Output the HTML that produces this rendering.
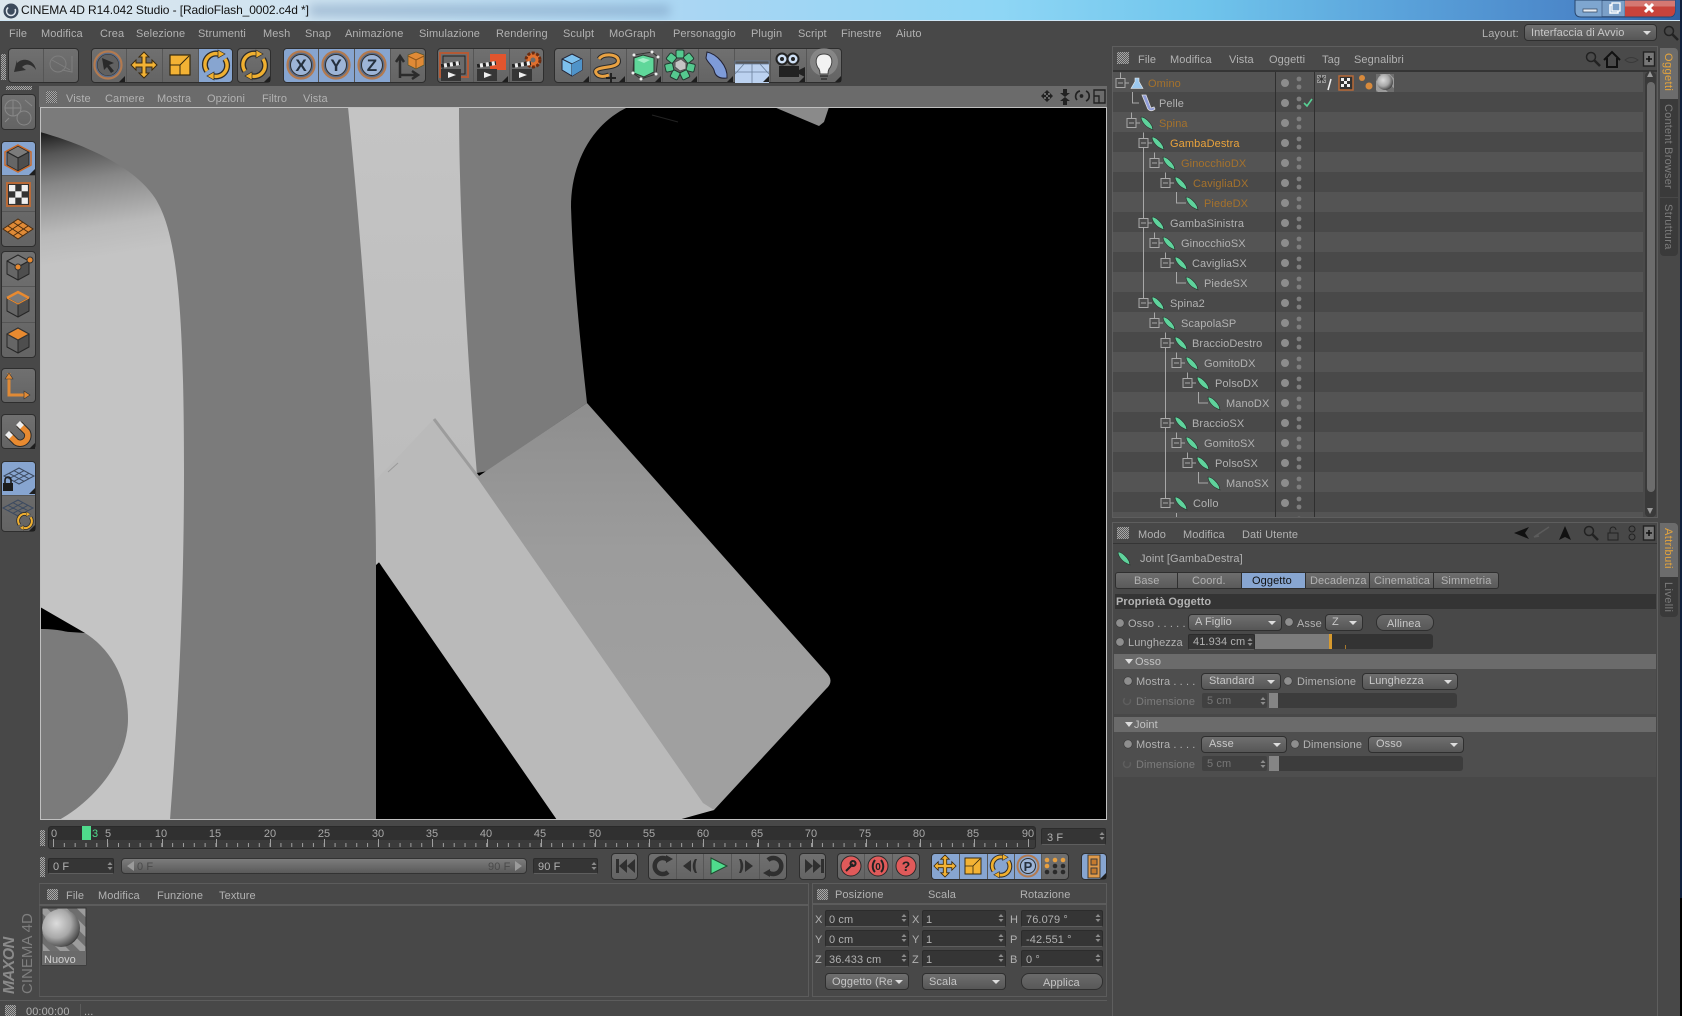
<!DOCTYPE html>
<html lang="it"><head><meta charset="utf-8"><title>CINEMA 4D R14.042 Studio</title>
<style>
html,body{margin:0;padding:0;width:1682px;height:1016px;overflow:hidden;background:#484848}
body{position:relative;font-family:"Liberation Sans",sans-serif;font-size:11px;color:#b2b2b2}
span{position:absolute;white-space:nowrap;line-height:14px;letter-spacing:.1px;margin-top:1px}
div{position:absolute;box-sizing:border-box}
.o{color:#a5722c}
.gr{background:repeating-conic-gradient(#a6a6a6 0 25%,#5a5a5a 0 50%) 0 0/2px 2px}
.g{background:linear-gradient(#707070,#646464);border:1px solid #2e2e2e;border-radius:4px}
.bl{background:#87a5d0}
.f{background:#353535;border:1px solid #2c2c2c;border-bottom-color:#5e5e5e;border-radius:2px}
.dd{background:linear-gradient(#6f6f6f,#565656);border:1px solid #2f2f2f;border-radius:4px}
.dd:after{content:"";position:absolute;right:5px;top:6px;border:4px solid transparent;border-top:4px solid #ddd;border-bottom:0}
.btn{background:linear-gradient(#6a6a6a,#585858);border:1px solid #2f2f2f;border-radius:8px}
.tab{background:linear-gradient(#6e6e6e,#5a5a5a);border:1px solid #2f2f2f;border-left:0;height:17px;top:572px}
.sec{background:#6b6b6b;left:1114px;width:542px;height:15px}
.vt{writing-mode:vertical-rl;letter-spacing:.4px}
</style></head><body>

<!-- title bar -->
<div style="left:0;top:0;width:1682px;height:21px;background:linear-gradient(90deg,#dde7ee 0,#cfe3f0 300px,#a9d6f3 700px,#8ed6f5 1000px,#70c5ec 1200px,#5aa2da 1400px,#4a85c8 1580px,#2f5f9f 1682px);border-bottom:1px solid #cfe6f5"></div>
<div style="left:310px;top:5px;width:360px;height:11px;background:#6f8fb4;opacity:.45;filter:blur(5px)"></div>
<span style="left:21px;top:2px;font-size:12px;color:#111;letter-spacing:-.1px">CINEMA 4D R14.042 Studio - [RadioFlash_0002.c4d *]</span>

<!-- menu -->
<span style="left:9px;top:26px">File</span><span style="left:41px;top:26px">Modifica</span><span style="left:100px;top:26px">Crea</span><span style="left:136px;top:26px">Selezione</span><span style="left:198px;top:26px">Strumenti</span><span style="left:263px;top:26px">Mesh</span><span style="left:305px;top:26px">Snap</span><span style="left:345px;top:26px">Animazione</span><span style="left:419px;top:26px">Simulazione</span><span style="left:496px;top:26px">Rendering</span><span style="left:563px;top:26px">Sculpt</span><span style="left:609px;top:26px">MoGraph</span><span style="left:673px;top:26px">Personaggio</span><span style="left:751px;top:26px">Plugin</span><span style="left:798px;top:26px">Script</span><span style="left:841px;top:26px">Finestre</span><span style="left:896px;top:26px">Aiuto</span>
<span style="left:1482px;top:26px">Layout:</span>
<div class="dd" style="left:1524px;top:24px;width:133px;height:17px"></div>
<span style="left:1531px;top:25px;color:#c8c8c8">Interfaccia di Avvio</span>

<!-- toolbar groups -->
<div class="gr" style="left:1px;top:54px;width:5px;height:26px"></div>
<div class="g" style="left:8px;top:48px;width:71px;height:35px"></div>
<div class="g" style="left:91px;top:48px;width:142px;height:35px"></div>
<div class="bl" style="left:198px;top:49px;width:34px;height:33px;border-radius:0 3px 3px 0"></div>
<div class="g" style="left:237px;top:48px;width:34px;height:35px"></div>
<div class="g" style="left:283px;top:48px;width:143px;height:35px"></div>
<div class="bl" style="left:284px;top:49px;width:106px;height:33px;border-radius:3px 0 0 3px"></div>
<div class="g" style="left:437px;top:48px;width:107px;height:35px"></div>
<div class="g" style="left:554px;top:48px;width:288px;height:35px"></div>

<!-- viewport header -->
<div style="left:39px;top:86px;width:1068px;height:21px;background:#6b6b6b"></div>
<div class="gr" style="left:46px;top:91px;width:11px;height:12px"></div>
<span style="left:66px;top:91px">Viste</span><span style="left:105px;top:91px">Camere</span><span style="left:157px;top:91px">Mostra</span><span style="left:207px;top:91px">Opzioni</span><span style="left:262px;top:91px">Filtro</span><span style="left:303px;top:91px">Vista</span>

<!-- left palette -->
<div class="gr" style="left:6px;top:86px;width:26px;height:4px"></div>
<div class="g" style="left:1px;top:94px;width:35px;height:36px"></div>
<div class="g" style="left:1px;top:141px;width:35px;height:106px"></div>
<div class="bl" style="left:2px;top:142px;width:33px;height:33px;border-radius:3px 3px 0 0"></div>
<div class="g" style="left:1px;top:251px;width:35px;height:107px"></div>
<div class="g" style="left:1px;top:368px;width:35px;height:35px"></div>
<div class="g" style="left:1px;top:414px;width:35px;height:35px"></div>
<div class="g" style="left:1px;top:461px;width:35px;height:71px"></div>
<div class="bl" style="left:2px;top:462px;width:33px;height:33px;border-radius:3px 3px 0 0"></div>

<!-- timeline -->
<div class="gr" style="left:40px;top:830px;width:5px;height:16px"></div>
<div style="left:48px;top:826px;width:988px;height:23px;background:linear-gradient(#303030 0,#303030 13px,#3b3b3b 13px);border:1px solid #2a2a2a;border-radius:3px"></div>
<div class="f" style="left:1041px;top:828px;width:65px;height:17px"></div>
<span style="left:1047px;top:830px">3 F</span>
<div class="gr" style="left:40px;top:857px;width:5px;height:20px"></div>
<div class="f" style="left:48px;top:858px;width:66px;height:16px"></div>
<span style="left:53px;top:859px">0 F</span>
<div style="left:121px;top:858px;width:406px;height:16px;border-radius:4px;border:1px solid #333;background:linear-gradient(#7c7c7c,#5a5a5a)"></div>
<span style="left:137px;top:859px;color:#4a4a4a">0 F</span><span style="left:488px;top:859px;color:#4a4a4a">90 F</span>
<div class="f" style="left:533px;top:858px;width:65px;height:16px"></div>
<span style="left:538px;top:859px">90 F</span>
<div class="g" style="left:611px;top:853px;width:27px;height:27px"></div>
<div class="g" style="left:648px;top:853px;width:139px;height:27px"></div>
<div class="g" style="left:799px;top:853px;width:27px;height:27px"></div>
<div class="g" style="left:837px;top:853px;width:83px;height:27px"></div>
<div class="g" style="left:931px;top:853px;width:138px;height:27px"></div>
<div class="bl" style="left:932px;top:854px;width:109px;height:25px;border-radius:3px 0 0 3px"></div>
<div class="g bl" style="left:1081px;top:853px;width:26px;height:27px"></div>

<!-- material panel -->
<div style="left:39px;top:883px;width:770px;height:114px;border:1px solid #5c5c5c;border-left-color:#565656"></div>
<div style="left:39px;top:904px;width:770px;height:2px;background:#5c5c5c"></div>
<div class="gr" style="left:47px;top:889px;width:11px;height:11px"></div>
<span style="left:66px;top:888px">File</span><span style="left:98px;top:888px">Modifica</span><span style="left:157px;top:888px">Funzione</span><span style="left:219px;top:888px">Texture</span>

<!-- coord panel -->
<div style="left:812px;top:883px;width:295px;height:114px;border:1px solid #5c5c5c"></div>
<div style="left:812px;top:903px;width:295px;height:2px;background:#5c5c5c"></div>
<div class="gr" style="left:817px;top:889px;width:11px;height:11px"></div>
<span style="left:835px;top:887px">Posizione</span><span style="left:928px;top:887px">Scala</span><span style="left:1020px;top:887px">Rotazione</span>
<span style="left:815px;top:912px">X</span><span style="left:815px;top:932px">Y</span><span style="left:815px;top:952px">Z</span>
<span style="left:912px;top:912px">X</span><span style="left:912px;top:932px">Y</span><span style="left:912px;top:952px">Z</span>
<span style="left:1010px;top:912px">H</span><span style="left:1010px;top:932px">P</span><span style="left:1010px;top:952px">B</span>
<div class="f" style="left:825px;top:910px;width:84px;height:17px"></div><div class="f" style="left:825px;top:930px;width:84px;height:17px"></div><div class="f" style="left:825px;top:950px;width:84px;height:17px"></div>
<div class="f" style="left:922px;top:910px;width:84px;height:17px"></div><div class="f" style="left:922px;top:930px;width:84px;height:17px"></div><div class="f" style="left:922px;top:950px;width:84px;height:17px"></div>
<div class="f" style="left:1021px;top:910px;width:82px;height:17px"></div><div class="f" style="left:1021px;top:930px;width:82px;height:17px"></div><div class="f" style="left:1021px;top:950px;width:82px;height:17px"></div>
<span style="left:829px;top:912px">0 cm</span><span style="left:829px;top:932px">0 cm</span><span style="left:829px;top:952px">36.433 cm</span>
<span style="left:926px;top:912px">1</span><span style="left:926px;top:932px">1</span><span style="left:926px;top:952px">1</span>
<span style="left:1026px;top:912px">76.079 °</span><span style="left:1026px;top:932px">-42.551 °</span><span style="left:1026px;top:952px">0 °</span>
<div class="dd" style="left:825px;top:973px;width:84px;height:17px"></div><span style="left:832px;top:974px;width:60px;overflow:hidden;color:#c4c4c4">Oggetto (Relativo)</span>
<div class="dd" style="left:922px;top:973px;width:84px;height:17px"></div><span style="left:929px;top:974px;color:#c4c4c4">Scala</span>
<div class="btn" style="left:1021px;top:973px;width:82px;height:17px"></div><span style="left:1043px;top:975px;color:#c4c4c4">Applica</span>

<!-- status -->
<div style="left:0;top:1000px;width:1107px;height:1px;background:#5c5c5c"></div>
<div class="gr" style="left:5px;top:1005px;width:11px;height:11px"></div>
<span style="left:26px;top:1004px">00:00:00</span>
<div style="left:80px;top:1004px;width:1px;height:12px;background:#5c5c5c"></div>
<span style="left:84px;top:1004px">...</span>

<!-- MAXON logo -->
<span class="vt" style="left:3px;top:934px;height:60px;transform:rotate(180deg);font-size:16px;line-height:14px;color:#8a8a8a;letter-spacing:-.6px;margin:0"><b style="font-style:italic">MAXON</b></span>
<span class="vt" style="left:19px;top:913px;height:81px;transform:rotate(180deg);font-size:15px;line-height:17px;color:#7e7e7e;letter-spacing:0;margin:0">CINEMA 4D</span>

<!-- object manager -->
<div style="left:1112px;top:46px;width:546px;height:472px;border:1px solid #5e5e5e;background:#4a4a4a"></div>
<div style="left:1113px;top:70px;width:544px;height:2px;background:#353535"></div>
<div class="gr" style="left:1117px;top:52px;width:12px;height:12px"></div>
<span style="left:1138px;top:52px">File</span><span style="left:1170px;top:52px">Modifica</span><span style="left:1229px;top:52px">Vista</span><span style="left:1269px;top:52px">Oggetti</span><span style="left:1322px;top:52px">Tag</span><span style="left:1354px;top:52px">Segnalibri</span>
<div style="left:1113px;top:72px;width:530px;height:445px;background:repeating-linear-gradient(#545454 0,#545454 20px,#494949 20px,#494949 40px)"></div>
<div style="left:1275px;top:72px;width:1px;height:445px;background:#2f2f2f"></div>
<div style="left:1314px;top:72px;width:1px;height:445px;background:#2f2f2f"></div>
<div style="left:1645px;top:72px;width:11px;height:445px;background:#3a3a3a;border-radius:4px"></div>
<div style="left:1647px;top:82px;width:8px;height:410px;background:#6c6c6c;border-radius:4px"></div>
<div style="left:0;top:1px">
<span class="o" style="left:1148px;top:75px">Omino</span>
<span style="left:1159px;top:95px">Pelle</span>
<span class="o" style="left:1159px;top:115px">Spina</span>
<span style="left:1170px;top:135px;color:#eaa33c">GambaDestra</span>
<span class="o" style="left:1181px;top:155px">GinocchioDX</span>
<span class="o" style="left:1193px;top:175px">CavigliaDX</span>
<span class="o" style="left:1204px;top:195px">PiedeDX</span>
<span style="left:1170px;top:215px">GambaSinistra</span>
<span style="left:1181px;top:235px">GinocchioSX</span>
<span style="left:1192px;top:255px">CavigliaSX</span>
<span style="left:1204px;top:275px">PiedeSX</span>
<span style="left:1170px;top:295px">Spina2</span>
<span style="left:1181px;top:315px">ScapolaSP</span>
<span style="left:1192px;top:335px">BraccioDestro</span>
<span style="left:1204px;top:355px">GomitoDX</span>
<span style="left:1215px;top:375px">PolsoDX</span>
<span style="left:1226px;top:395px">ManoDX</span>
<span style="left:1192px;top:415px">BraccioSX</span>
<span style="left:1204px;top:435px">GomitoSX</span>
<span style="left:1215px;top:455px">PolsoSX</span>
<span style="left:1226px;top:475px">ManoSX</span>
<span style="left:1193px;top:495px">Collo</span>
</div>

<!-- right tabs -->
<div style="left:1660px;top:48px;width:18px;height:51px;background:#6c6c6c;border-radius:0 4px 0 0"></div>
<div style="left:1660px;top:99px;width:18px;height:98px;background:#3a3a3a"></div>
<div style="left:1660px;top:198px;width:18px;height:58px;background:#3a3a3a;border-radius:0 0 4px 4px"></div>
<div style="left:1660px;top:523px;width:18px;height:54px;background:#6c6c6c;border-radius:0 4px 0 0"></div>
<div style="left:1660px;top:577px;width:18px;height:40px;background:#3a3a3a;border-radius:0 0 4px 4px"></div>
<span class="vt" style="left:1661px;top:52px;color:#e6a53c">Oggetti</span>
<span class="vt" style="left:1661px;top:103px;color:#7c7c7c;letter-spacing:.2px">Content Browser</span>
<span class="vt" style="left:1661px;top:203px;color:#7c7c7c">Struttura</span>
<span class="vt" style="left:1661px;top:527px;color:#e6a53c">Attributi</span>
<span class="vt" style="left:1661px;top:581px;color:#7c7c7c">Livelli</span>
<div style="left:1680px;top:0;width:2px;height:898px;background:#10203c"></div>
<div style="left:1680px;top:898px;width:2px;height:118px;background:#000"></div>

<!-- attribute manager -->
<div style="left:1112px;top:522px;width:546px;height:494px;border:1px solid #5e5e5e;border-bottom:0"></div>
<div style="left:1113px;top:543px;width:544px;height:1px;background:#353535"></div>
<div class="gr" style="left:1117px;top:527px;width:12px;height:12px"></div>
<span style="left:1138px;top:527px">Modo</span><span style="left:1183px;top:527px">Modifica</span><span style="left:1242px;top:527px">Dati Utente</span>
<span style="left:1140px;top:551px">Joint [GambaDestra]</span>
<div class="tab" style="left:1115px;width:63px;border-left:1px solid #2f2f2f;border-radius:3px 0 0 3px"></div>
<div class="tab" style="left:1178px;width:64px"></div>
<div class="tab" style="left:1242px;width:64px;background:#88a6d1"></div>
<div class="tab" style="left:1306px;width:64px"></div>
<div class="tab" style="left:1370px;width:64px"></div>
<div class="tab" style="left:1434px;width:65px;border-radius:0 3px 3px 0"></div>
<span style="left:1134px;top:573px">Base</span><span style="left:1192px;top:573px">Coord.</span><span style="left:1252px;top:573px;color:#111">Oggetto</span><span style="left:1310px;top:573px">Decadenza</span><span style="left:1374px;top:573px">Cinematica</span><span style="left:1441px;top:573px">Simmetria</span>
<div style="left:1115px;top:594px;width:541px;height:15px;background:#343434"></div>
<span style="left:1116px;top:594px;font-weight:bold;color:#b4b4b4">Proprietà Oggetto</span>
<span style="left:1128px;top:616px">Osso . . . . .</span>
<div class="dd" style="left:1188px;top:614px;width:94px;height:17px"></div><span style="left:1195px;top:614px;color:#c8c8c8">A Figlio</span>
<span style="left:1297px;top:616px">Asse</span>
<div class="dd" style="left:1325px;top:614px;width:38px;height:17px"></div><span style="left:1332px;top:614px;color:#c8c8c8">Z</span>
<div class="btn" style="left:1376px;top:614px;width:58px;height:17px"></div><span style="left:1387px;top:616px;color:#c8c8c8">Allinea</span>
<span style="left:1128px;top:635px">Lunghezza</span>
<div class="f" style="left:1188px;top:634px;width:67px;height:16px"></div><span style="left:1193px;top:634px">41.934 cm</span>
<div style="left:1255px;top:634px;width:178px;height:15px;background:#333;border-radius:0 3px 3px 0"></div>
<div style="left:1255px;top:634px;width:74px;height:15px;background:#7c7c7c"></div>
<div style="left:1329px;top:634px;width:3px;height:15px;background:#d79a2e"></div>
<div style="left:1345px;top:645px;width:1px;height:4px;background:#a8792c"></div>
<div style="left:1114px;top:669px;width:542px;height:45px;background:#4e4e4e"></div>
<div class="sec" style="top:654px"></div><span style="left:1135px;top:654px;color:#c4c4c4">Osso</span>
<span style="left:1136px;top:674px">Mostra . . . .</span>
<div class="dd" style="left:1201px;top:673px;width:80px;height:17px"></div><span style="left:1209px;top:673px;color:#c8c8c8">Standard</span>
<span style="left:1297px;top:674px">Dimensione</span>
<div class="dd" style="left:1362px;top:673px;width:96px;height:17px"></div><span style="left:1369px;top:673px;color:#c8c8c8">Lunghezza</span>
<span style="left:1136px;top:694px;color:#7c7c7c">Dimensione</span>
<div style="left:1202px;top:693px;width:65px;height:15px;background:#414141;border-radius:2px"></div><span style="left:1207px;top:693px;color:#777">5 cm</span>
<div style="left:1269px;top:693px;width:188px;height:15px;background:#3c3c3c;border-radius:0 3px 3px 0"></div>
<div style="left:1269px;top:693px;width:9px;height:15px;background:#858585"></div>
<div style="left:1114px;top:732px;width:542px;height:45px;background:#4e4e4e"></div>
<div class="sec" style="top:717px"></div><span style="left:1134px;top:717px;color:#c4c4c4">Joint</span>
<span style="left:1136px;top:737px">Mostra . . . .</span>
<div class="dd" style="left:1201px;top:736px;width:86px;height:17px"></div><span style="left:1209px;top:736px;color:#c8c8c8">Asse</span>
<span style="left:1303px;top:737px">Dimensione</span>
<div class="dd" style="left:1368px;top:736px;width:96px;height:17px"></div><span style="left:1376px;top:736px;color:#c8c8c8">Osso</span>
<span style="left:1136px;top:757px;color:#7c7c7c">Dimensione</span>
<div style="left:1202px;top:756px;width:65px;height:15px;background:#414141;border-radius:2px"></div><span style="left:1207px;top:756px;color:#777">5 cm</span>
<div style="left:1269px;top:756px;width:194px;height:15px;background:#3c3c3c;border-radius:0 3px 3px 0"></div>
<div style="left:1269px;top:756px;width:10px;height:15px;background:#858585"></div>

<!-- graphics overlay -->
<svg width="1682" height="1016" viewBox="0 0 1682 1016" style="position:absolute;left:0;top:0" font-family="Liberation Sans, sans-serif">
<defs>
<clipPath id="vp"><rect x="40" y="107" width="1067" height="713"/></clipPath>
<linearGradient id="lg" gradientUnits="userSpaceOnUse" x1="50" y1="126" x2="72" y2="262"><stop offset="0" stop-color="#0e0e0e"/><stop offset=".2" stop-color="#555"/><stop offset=".42" stop-color="#868686"/><stop offset=".78" stop-color="#bababa"/><stop offset="1" stop-color="#c4c4c4"/></linearGradient>
<linearGradient id="pn" gradientUnits="userSpaceOnUse" x1="0" y1="403" x2="0" y2="700"><stop offset="0" stop-color="#8e8e8e"/><stop offset=".5" stop-color="#9c9c9c"/><stop offset="1" stop-color="#a0a0a0"/></linearGradient>
<linearGradient id="sg" gradientUnits="userSpaceOnUse" x1="0" y1="107" x2="0" y2="560"><stop offset="0" stop-color="#c4c4c4"/><stop offset="1" stop-color="#bbb"/></linearGradient>
<radialGradient id="sph" cx=".38" cy=".38" r=".7"><stop offset="0" stop-color="#dcdcdc"/><stop offset=".55" stop-color="#a8a8a8"/><stop offset=".9" stop-color="#505050"/><stop offset="1" stop-color="#1a1a1a"/></radialGradient>
<pattern id="dots" patternUnits="userSpaceOnUse" x="1276" y="72" width="38" height="20"><circle cx="9" cy="10" r="4" fill="#8d8d8d"/><circle cx="23" cy="6" r="2.4" fill="#7e7e7e"/><circle cx="23" cy="14" r="2.4" fill="#7e7e7e"/></pattern>
<pattern id="tk" patternUnits="userSpaceOnUse" x="53" y="0" width="10.83" height="10"><rect width="1" height="10" fill="#a0a0a0"/></pattern>
<pattern id="st" patternUnits="userSpaceOnUse" width="14" height="14" patternTransform="rotate(-45)"><rect width="14" height="14" fill="#6e6e6e"/><rect width="7" height="14" fill="#9c9c9c"/></pattern>
<g id="mb" stroke="#a8a8a8"><path d="M0-4.500v-6M4.500 0h4" fill="none"/><path d="M-4.500-4.500h9v9h-9z" fill="#4e4e4e"/><path d="M-2.500 0h5" fill="none"/></g>
<g id="bn"><path d="M-6-6C-2-6 3-1 5 3L6 7 2 5C-2 3-6-2-6-6Z" fill="#5fd39c" stroke="#25302a" stroke-width=".6"/></g>
<g id="rot" fill="none"><path d="M3-11A11 11 0 0 0-9 6M-3 11A11 11 0 0 0 9-6" stroke="#2c2c2c" stroke-width="6"/><path d="M3-11A11 11 0 0 0-9 6M-3 11A11 11 0 0 0 9-6" stroke="#f0b030" stroke-width="3.400"/><path d="M2-15l7 4-7 4zM-2 15l-7-4 7-4z" fill="#f0b030" stroke="#2c2c2c" stroke-width=".7"/></g>
<g id="mv"><path d="M0-13l5 5h-3v6h6v-3l5 5-5 5v-3h-6v6h3l-5 5-5-5h3v-6h-6v3l-5-5 5-5v3h6v-6h-3z" fill="#f3b234" stroke="#3a2a10"/></g>
<g id="sc"><rect x="-10" y="-10" width="20" height="20" fill="#f3b234" stroke="#33280f" stroke-width="1.200"/><path d="M-10 0H0V10M0 0L9-9" fill="none" stroke="#33280f"/></g>
<g id="ring"><circle r="13.500" fill="#5a6c88" stroke="#b27a50" stroke-width="2.200"/><circle r="10.500" fill="#9db4d6" stroke="#2e2e2e"/></g>
<g id="cl"><rect x="-10" y="-1" width="20" height="12" fill="#363636"/><path d="M-3 2l8 3-8 3z" fill="#eee"/><path d="M-10-4l19-3" stroke="#eee" stroke-width="4"/><path d="M-10-4l19-3" stroke="#222" stroke-width="4" stroke-dasharray="3 3"/></g>
<g id="pc" stroke="#262626" stroke-linejoin="round"><path d="M0-12L11-6 0 0-11-6Z" fill="#7b7b7b"/><path d="M-11-6L0 0V13L-11 7Z" fill="#666"/><path d="M11-6L0 0V13L11 7Z" fill="#4e4e4e"/></g>
<g id="sp" fill="#8c8c8c"><path d="M-2.500-1L0-4 2.500-1ZM-2.500 1L0 4 2.500 1Z"/></g>
<g id="rad"><circle r="4.200" fill="#8e8e8e" stroke="#383838" stroke-width=".6"/></g>
<g id="rad2"><circle r="3.500" fill="none" stroke="#5e5e5e" stroke-width="1.500" stroke-dasharray="14 6"/></g>
<g id="plus"><rect x="-5.500" y="-7" width="11" height="14" fill="#777" stroke="#222" stroke-width="1.400"/><path d="M-3 0h6M0-3v6" stroke="#111" stroke-width="1.600"/></g>
<g id="srch" fill="none" stroke="#222"><circle cx="-2" cy="-2" r="4.500" stroke-width="1.500"/><path d="M1.500 1.500L7 7" stroke-width="2.500"/></g>
<g id="grd" fill="none" stroke="#3c4a60"><path d="M-15 0L0-8 15 0 0 8ZM-10-2.700L5 5.300M-5-5.300L10 2.700M-10 2.700L5-5.300M-5 5.300L10-2.700"/></g>
</defs>

<!-- app icon -->
<circle cx="11" cy="11" r="7.500" fill="#3c4a5c"/><circle cx="11" cy="11" r="4.500" fill="none" stroke="#dfe6ee" stroke-width="1.500" stroke-dasharray="18 8"/>
<!-- window controls -->
<path d="M1575 0h100v11q0 6-6 6h-88q-6 0-6-6z" fill="#7ea6d0" stroke="#27456e"/>
<path d="M1602 .5h23v16h-23z" fill="#7ba0c8" stroke="#2d4a72" stroke-width=".6"/>
<path d="M1625 .5h50v10q0 6-6 6h-44z" fill="#c8433b"/><path d="M1625 .5h50v6h-50z" fill="#d98a85" opacity=".75"/>
<path d="M1583 9h14v3h-14z" fill="#e8eef4" stroke="#33465e" stroke-width=".7"/>
<rect x="1610" y="5" width="8" height="8" fill="none" stroke="#fff" stroke-width="1.500"/><rect x="1612" y="3" width="8" height="8" fill="#7ba0c8" stroke="#fff" stroke-width="1.300"/>
<path d="M1645 4l8 8M1653 4l-8 8" stroke="#fff" stroke-width="3"/>
<use href="#srch" x="1671" y="33"/>

<!-- viewport -->
<g clip-path="url(#vp)">
<rect x="40" y="107" width="1067" height="713" fill="#000"/>
<path d="M40 107H628C590 125 571 165 571 207C573 270 580 340 587 403L478 477 376 558V820H40Z" fill="#7b7b7b"/>
<path d="M774 107L819 126 824 122 829 107Z" fill="#8a8a8a"/>
<path d="M348 107H459C459 200 466 340 477 475L376 565C376 472 370 330 348 107Z" fill="url(#sg)"/>
<path d="M477 473L488 471 479 479Z" fill="#000"/>
<path d="M470 482L587 403 826 672Q835 681 826 689L714 810 690 815Z" fill="url(#pn)"/>
<path d="M434 419L376 480V558L557 820H678L714 810 703 803 478 479Z" fill="#bababa"/>
<path d="M434 419L478 477" stroke="#9c9c9c" stroke-width="3" fill="none"/>
<path d="M388 472l10-9" stroke="#9a9a9a" fill="none"/>
<path d="M652 115l26 7" stroke="#222" fill="none"/>
<path d="M40 132C90 146 135 168 155 198C175 230 184 290 184 472C184 620 176 740 170 820H59C95 800 128 760 128 719C128 680 112 650 85 633L40 607Z" fill="url(#lg)"/>
<path d="M40 607L85 633 40 630Z" fill="#000"/>
<path d="M40 629C80 628 114 648 124 690C132 730 115 780 59 820H40Z" fill="#7b7b7b"/>
</g>
<rect x="40.500" y="107.500" width="1066" height="712" fill="none" stroke="#c0c0c0"/>

<!-- toolbar separators -->
<path d="M43.500 49v33M126.500 49v33M162.500 49v33M198.500 49v33M318.500 49v33M354.500 49v33M390.500 49v33M473.500 49v33M509.500 49v33M590.500 49v33M626.500 49v33M662.500 49v33M698.500 49v33M734.500 49v33M770.500 49v33M806.500 49v33" stroke="#565656" fill="none"/>
<!-- undo/redo -->
<path d="M17 60l-3 12 12-2-4-3c4-4 10-3 14 3-1-9-12-14-19-7z" fill="#2f2f2f"/>
<g fill="none" stroke="#7e7e7e"><circle cx="58" cy="64" r="8"/><path d="M52 60l18 10M72 56v16l-10-2"/></g>
<!-- select -->
<use href="#ring" x="108" y="65"/><circle cx="108" cy="65" r="10.500" fill="#616161"/>
<path d="M102 58l12 5-5 2 5 6-3 2-4-6-3 3z" fill="#2a2a2a"/>
<path d="M125 82h-6l6-6z" fill="#1e1e1e"/>
<use href="#mv" x="144" y="65"/><use href="#sc" x="180" y="65"/><use href="#rot" x="216" y="65"/><use href="#rot" x="254" y="65"/>
<path d="M270 82h-6l6-6z" fill="#1e1e1e"/>
<use href="#ring" x="301" y="65"/><use href="#ring" x="336" y="65"/><use href="#ring" x="372" y="65"/>
<text x="301" y="71" text-anchor="middle" font-size="17" font-weight="bold" fill="#25303e">X</text>
<text x="336" y="71" text-anchor="middle" font-size="17" font-weight="bold" fill="#25303e">Y</text>
<text x="372" y="71" text-anchor="middle" font-size="17" font-weight="bold" fill="#25303e">Z</text>
<path d="M400 78V58M396 62l4-6 4 6M400 75h16M412 71l6 4-6 4" stroke="#2b2b2b" stroke-width="2.500" fill="none"/>
<path d="M416 52l8 3v10l-8 4-8-4V55z" fill="#e08a36" stroke="#553" stroke-width=".7"/><path d="M408 56l8 4 8-4M416 60v9" stroke="#8d5519" fill="none"/>
<!-- clappers -->
<rect x="440" y="53" width="28" height="24" fill="none" stroke="#b35a36" stroke-width="2"/><rect x="443" y="56" width="22" height="18" fill="#6b6b6b" stroke="#222"/>
<use href="#cl" x="451" y="70"/>
<rect x="490" y="54" width="16" height="16" fill="#e2552e"/><use href="#cl" x="487" y="70"/><path d="M508 82h-6l6-6z" fill="#1e1e1e"/>
<circle cx="533" cy="60" r="7" fill="#e2702e" stroke="#6b2c10" stroke-dasharray="3 1.500" stroke-width="3"/><circle cx="533" cy="60" r="2.500" fill="#6b6b6b"/><use href="#cl" x="522" y="70"/>
<!-- group 6 -->
<path d="M572 54l10 5v11l-10 6-10-6V59z" fill="#7cc0ee" stroke="#223"/><path d="M562 59l10 5 10-5M572 64v12" stroke="#223" fill="none"/><path d="M572 64l10-5v11l-10 6z" fill="#4f93c9"/><path d="M589 82h-6l6-6z" fill="#1e1e1e"/>
<path d="M599 59c4-6 17-5 19 0s-3 7-10 8-14 2-12 6 8 4 13 2" fill="none" stroke="#2b2b2b" stroke-width="5"/><path d="M599 59c4-6 17-5 19 0s-3 7-10 8-14 2-12 6 8 4 13 2" fill="none" stroke="#e9a243" stroke-width="3"/><path d="M606 78h10M611 73v10" stroke="#222" stroke-width="2"/><path d="M625 82h-6l6-6z" fill="#1e1e1e"/>
<path d="M634 58l9-3 11 3v14l-10 5-10-4z" fill="#5fd79a" stroke="#2a3a30"/><path d="M637 60l6-2 7 2-6 3z" fill="#a4efc8"/>
<path d="M634 55l18-3 6 5-2 17-15 5-8-6z" fill="none" stroke="#333"/><g fill="#eee"><circle cx="634" cy="55" r="1.500"/><circle cx="652" cy="52" r="1.500"/><circle cx="658" cy="57" r="1.500"/><circle cx="656" cy="74" r="1.500"/><circle cx="641" cy="79" r="1.500"/><circle cx="633" cy="73" r="1.500"/></g><path d="M661 82h-6l6-6z" fill="#1e1e1e"/>
<g transform="translate(680 65)" fill="#55c98f" stroke="#223a30"><rect x="-4" y="-15" width="8" height="8" rx="1.500"/><rect x="-4" y="-15" width="8" height="8" rx="1.500" transform="rotate(51)"/><rect x="-4" y="-15" width="8" height="8" rx="1.500" transform="rotate(103)"/><rect x="-4" y="-15" width="8" height="8" rx="1.500" transform="rotate(154)"/><rect x="-4" y="-15" width="8" height="8" rx="1.500" transform="rotate(206)"/><rect x="-4" y="-15" width="8" height="8" rx="1.500" transform="rotate(257)"/><rect x="-4" y="-15" width="8" height="8" rx="1.500" transform="rotate(309)"/><path d="M-5-3L1-6 6-2V4L0 6-5 2Z" fill="#c4c4c4" stroke="#555"/></g><path d="M697 82h-6l6-6z" fill="#1e1e1e"/>
<path d="M707 52c10 2 21 14 20 26-8 1-12-2-13-8-2-5-7-8-8-12z" fill="#7e9bd8" stroke="#223"/><path d="M733 82h-6l6-6z" fill="#1e1e1e"/>
<rect x="735" y="61" width="34" height="22" fill="#bcd2f0"/><path d="M735 61h34v3h-34zM752 64v19M735 72h34M744 64l-9 10M760 64l9 10" fill="#555" stroke="#6a7f99" stroke-width=".8"/><path d="M769 82h-6l6-6z" fill="#1e1e1e"/>
<circle cx="782" cy="59" r="5.500" fill="#cfe0f5" stroke="#222" stroke-width="2"/><circle cx="793" cy="59" r="5.500" fill="#cfe0f5" stroke="#222" stroke-width="2"/><circle cx="782" cy="59" r="2" fill="#222"/><circle cx="793" cy="59" r="2" fill="#222"/><rect x="779" y="66" width="20" height="11" fill="#222"/><path d="M799 70l6-3v10l-6-3z" fill="#222"/><path d="M805 82h-6l6-6z" fill="#1e1e1e"/>
<circle cx="824" cy="62" r="14" fill="#9a9a9a" opacity=".55"/><path d="M824 54c-10 0-9 11-5 15 1 2 1 4 1 5h8c0-1 0-3 1-5 4-4 5-15-5-15z" fill="#f2f2f2" stroke="#444"/><path d="M820 76h8M821 79h6" stroke="#333" stroke-width="1.500"/><path d="M841 82h-6l6-6z" fill="#1e1e1e"/>

<!-- viewport header icons -->
<g transform="translate(0 -4)"><g fill="#222"><path d="M1047 94l3 3h-2v2h-2v-2h-2zM1047 106l3-3h-2v-2h-2v2h-2zM1041 100l3-3v2h2v2h-2v2zM1053 100l-3-3v2h-2v2h2v2z"/><path d="M1063 93h4v4h3l-5 4-5-4h3zM1065 101l5 4h-3v4h-4v-4h-3z"/></g>
<g fill="none" stroke="#222" stroke-width="1.700"><path d="M1086 95a5.500 5.500 0 0 1 0 10M1077 104a5.500 5.500 0 0 1 3-9"/><circle cx="1081.500" cy="100" r="1" fill="#222"/></g>
<path d="M1094 94h11v13h-11zM1094 100h5v7" fill="none" stroke="#222" stroke-width="1.400"/></g>

<!-- palette separators + icons -->
<path d="M2 175.500h33M2 211.500h33M2 286.500h33M2 322.500h33M2 495.500h33" stroke="#555"/>
<g fill="none" stroke="#888"><circle cx="13" cy="108" r="8"/><circle cx="24" cy="118" r="7"/><path d="M5 108h16M13 100v16M25 100l7 6M9 118l-4 4"/></g>
<use href="#pc" x="18" y="158"/><path d="M18 145l13 7v13l-13 7-13-7v-13z" fill="none" stroke="#c86a2a" stroke-width="1.500"/><path d="M35 175h-6l6-6z" fill="#1e1e1e"/>
<rect x="7" y="183" width="23" height="23" fill="#333" stroke="#b86a38" stroke-width="2"/><g fill="#f0f0f0"><rect x="9" y="185" width="6.300" height="6.300"/><rect x="21.600" y="185" width="6.300" height="6.300"/><rect x="15.300" y="191.300" width="6.300" height="6.300"/><rect x="9" y="197.600" width="6.300" height="6.300"/><rect x="21.600" y="197.600" width="6.300" height="6.300"/></g>
<path d="M3 229l15-10 15 10-15 10z" fill="#e08a36" stroke="#4a2c10"/><path d="M8 226l15 10M13 222l15 10M8 232l15-10M13 236l15-10" stroke="#4a2c10" fill="none"/>
<use href="#pc" x="18" y="267"/><circle cx="18" cy="267" r="3" fill="#e88a30" stroke="#333"/><circle cx="30" cy="260" r="3" fill="#e88a30" stroke="#333"/>
<use href="#pc" x="18" y="304"/><path d="M7 298l11-6 11 6" fill="none" stroke="#e88a30" stroke-width="2.500"/><path d="M7 298l11 6 11-6" fill="none" stroke="#e88a30" stroke-width="1"/>
<use href="#pc" x="18" y="340"/><path d="M18 328L29 334 18 340 7 334Z" fill="#e88a30" stroke="#333"/>
<path d="M9 373v22h17" fill="none" stroke="#e08a36" stroke-width="3"/><path d="M5 379l4-6 4 6zM24 391l6 4-6 4z" fill="#e08a36" stroke="#333" stroke-width=".6"/>
<path d="M8 434l8 8A7.700 7.700 0 0 0 27 432l-8-8" fill="none" stroke="#2a2a2a" stroke-width="7.500"/><path d="M8 434l8 8A7.700 7.700 0 0 0 27 432l-8-8" fill="none" stroke="#e88a30" stroke-width="5.500"/><path d="M7 433l4 4M18 423l4 4" stroke="#eee" stroke-width="5.500"/><path d="M35 449h-6l6-6z" fill="#1e1e1e"/>
<use href="#grd" x="19" y="476"/><rect x="3" y="483" width="10" height="8" fill="#1c1c1c"/><path d="M5 483v-3a3 3 0 0 1 6 0v3" fill="none" stroke="#1c1c1c" stroke-width="1.600"/><path d="M35 494h-6l6-6z" fill="#1e1e1e"/>
<use href="#grd" x="18" y="508"/><use href="#rot" transform="translate(25 521) scale(.62)"/><path d="M35 531h-6l6-6z" fill="#1e1e1e"/>

<!-- timeline -->
<rect x="53" y="843" width="974" height="4" fill="url(#tk)"/>
<path d="M53.500 839v8M107.500 839v8M162.500 839v8M216.500 839v8M270.500 839v8M324.500 839v8M378.500 839v8M432.500 839v8M487.500 839v8M541.500 839v8M595.500 839v8M649.500 839v8M703.500 839v8M758.500 839v8M812.500 839v8M866.500 839v8M920.500 839v8M974.500 839v8M1028.500 839v8" stroke="#a0a0a0"/>
<g font-size="11" fill="#a8a8a8" text-anchor="middle"><text x="54" y="837">0</text><text x="108" y="837">5</text><text x="161" y="837">10</text><text x="215" y="837">15</text><text x="270" y="837">20</text><text x="324" y="837">25</text><text x="378" y="837">30</text><text x="432" y="837">35</text><text x="486" y="837">40</text><text x="540" y="837">45</text><text x="595" y="837">50</text><text x="649" y="837">55</text><text x="703" y="837">60</text><text x="757" y="837">65</text><text x="811" y="837">70</text><text x="865" y="837">75</text><text x="919" y="837">80</text><text x="973" y="837">85</text><text x="1028" y="837">90</text></g>
<rect x="82" y="826" width="9" height="14" fill="#4fdb8c"/>
<text x="92" y="837" font-size="11" fill="#4fdb8c">3</text>
<use href="#sp" x="110" y="866"/><use href="#sp" x="594" y="866"/><use href="#sp" x="1102" y="836"/>
<path d="M134 861l-7 5 7 5zM515 861l7 5-7 5z" fill="#9a9a9a"/>

<!-- transport -->
<path d="M676.500 854v25M703.500 854v25M731.500 854v25M759.500 854v25M864.500 854v25M892.500 854v25M959.500 854v25M987.500 854v25M1014.500 854v25M1041.500 854v25" stroke="#565656"/>
<g fill="#2f2f2f"><path d="M616 859h3v14h-3zM619 866l8-7v14zM627 866l8-7v14z"/><path d="M683 866l8-6v12zM695 859c-3 4-3 10 0 14h2c-2-4-2-10 0-14z"/><path d="M741 859c3 4 3 10 0 14h-2c2-4 2-10 0-14zM745 860l8 6-8 6z"/><path d="M805 859l8 7-8 7zM813 859l8 7-8 7zM821 859h3v14h-3z"/></g>
<path d="M668 860a8 8 0 1 0 0 12" fill="none" stroke="#2f2f2f" stroke-width="4.500"/><path d="M666 855l7 4-7 4z" fill="#2f2f2f"/>
<path d="M768 860a8 8 0 1 1 0 12" fill="none" stroke="#2f2f2f" stroke-width="4.500"/><path d="M770 869l-7 4 7 4z" fill="#2f2f2f"/>
<path d="M711 858l16 8-16 8z" fill="#4fdb8c" stroke="#1d4a2e"/>
<g stroke="#2a2a2a"><circle cx="851" cy="866" r="10" fill="#e05a5a"/><circle cx="878" cy="866" r="10" fill="#e05a5a"/><circle cx="906" cy="866" r="10" fill="#e05a5a"/></g>
<path d="M846 871l7-7M853 861a2.500 2.500 0 1 0 .1 0" fill="none" stroke="#222" stroke-width="2"/>
<path d="M875 860c-3 4-3 9 0 12M881 860c3 4 3 9 0 12" fill="none" stroke="#222" stroke-width="2"/><text x="878" y="870" font-size="10" text-anchor="middle" fill="#222" font-weight="bold">0</text>
<text x="906" y="871" font-size="14" font-weight="bold" text-anchor="middle" fill="#222">?</text>
<use href="#mv" transform="translate(945 866) scale(.85)"/><use href="#sc" transform="translate(973 866) scale(.8)"/><use href="#rot" transform="translate(1001 866) scale(.8)"/>
<circle cx="1028" cy="866" r="10.500" fill="#8ea8cc" stroke="#b27a50" stroke-width="2"/><circle cx="1028" cy="866" r="7.500" fill="#9db4d6" stroke="#2e2e2e"/><text x="1028" y="871" font-size="13" font-weight="bold" text-anchor="middle" fill="#25303e">P</text>
<g fill="#2b2b2b"><circle cx="1047" cy="860" r="2.300" fill="#e8a040"/><circle cx="1055" cy="860" r="2.300" fill="#e8a040"/><circle cx="1063" cy="860" r="2.300" fill="#e8a040"/><circle cx="1047" cy="866" r="2.300" fill="#e8a040"/><circle cx="1055" cy="866" r="2.300"/><circle cx="1063" cy="866" r="2.300"/><circle cx="1047" cy="872" r="2.300"/><circle cx="1055" cy="872" r="2.300"/><circle cx="1063" cy="872" r="2.300"/></g>
<rect x="1088" y="855" width="12" height="23" fill="#e09a4a" stroke="#3a3a3a"/><path d="M1091 859h6v6h-6zM1091 868h6v6h-6z" fill="#c47a2e" stroke="#3a3a3a"/><path d="M1106 879h-6l6-6z" fill="#1e1e1e"/>

<!-- material -->
<rect x="42" y="908" width="44" height="57" fill="url(#st)" stroke="#333"/><rect x="42" y="951" width="44" height="14" fill="#6a6a6a"/>
<circle cx="61" cy="928" r="19" fill="url(#sph)"/>
<text x="44" y="963" font-size="11" fill="#d0d0d0">Nuovo</text>

<!-- spinners for coords -->
<use href="#sp" x="904" y="918"/><use href="#sp" x="904" y="938"/><use href="#sp" x="904" y="958"/><use href="#sp" x="1001" y="918"/><use href="#sp" x="1001" y="938"/><use href="#sp" x="1001" y="958"/><use href="#sp" x="1098" y="918"/><use href="#sp" x="1098" y="938"/><use href="#sp" x="1098" y="958"/>
<use href="#sp" x="1250" y="642"/><use href="#sp" x="1263" y="701"/><use href="#sp" x="1263" y="764"/>

<!-- object manager tree -->
<g transform="translate(0 1)">
<rect x="1276" y="71" width="38" height="445" fill="url(#dots)"/>
<path d="M1143.500 142V302M1165.500 342V502M1132.500 91V102H1139M1176.500 191V202H1186M1176.500 271V282H1186M1198.500 391V402H1208M1198.500 471V482H1208M1176.500 512V516" stroke="#a8a8a8" fill="none"/>
<use href="#mb" x="1120.500" y="82"/><use href="#mb" x="1131.500" y="122"/><use href="#mb" x="1143.500" y="142"/><use href="#mb" x="1154.500" y="162"/><use href="#mb" x="1165.500" y="182"/>
<use href="#mb" x="1143.500" y="222"/><use href="#mb" x="1154.500" y="242"/><use href="#mb" x="1165.500" y="262"/>
<use href="#mb" x="1143.500" y="302"/><use href="#mb" x="1154.500" y="322"/><use href="#mb" x="1165.500" y="342"/><use href="#mb" x="1176.500" y="362"/><use href="#mb" x="1187.500" y="382"/>
<use href="#mb" x="1165.500" y="422"/><use href="#mb" x="1176.500" y="442"/><use href="#mb" x="1187.500" y="462"/><use href="#mb" x="1165.500" y="502"/>
<path d="M1131 87.500h12l-4-7v-3.500h-4v3.500z" fill="#9cc8ee" stroke="#eee" stroke-width=".6"/>
<path d="M1142 94l5 12c1 4 5 5 8 2l-1-2-3 1-5-13z" fill="#8f9cd8" stroke="#ddd" stroke-width=".8"/>
<use href="#bn" x="1147" y="122"/><use href="#bn" x="1158" y="142"/><use href="#bn" x="1169" y="162"/><use href="#bn" x="1181" y="182"/><use href="#bn" x="1192" y="202"/>
<use href="#bn" x="1158" y="222"/><use href="#bn" x="1169" y="242"/><use href="#bn" x="1181" y="262"/><use href="#bn" x="1192" y="282"/>
<use href="#bn" x="1158" y="302"/><use href="#bn" x="1169" y="322"/><use href="#bn" x="1181" y="342"/><use href="#bn" x="1192" y="362"/><use href="#bn" x="1203" y="382"/><use href="#bn" x="1214" y="402"/>
<use href="#bn" x="1181" y="422"/><use href="#bn" x="1192" y="442"/><use href="#bn" x="1203" y="462"/><use href="#bn" x="1214" y="482"/><use href="#bn" x="1181" y="502"/>
<path d="M1304 102l3 3 5-7" fill="none" stroke="#58d094" stroke-width="1.600"/>
<!-- tags -->
<rect x="1317" y="74" width="9" height="8" fill="#999"/><path d="M1318 75l7 6M1325 75l-7 6M1321.500 74v8M1317 78h9" stroke="#333" stroke-width=".8"/><path d="M1331 78l-3 11" stroke="#eee" stroke-width="1.500"/>
<rect x="1339" y="75" width="14" height="14" fill="#333" stroke="#b86a38" stroke-width="1.500"/><path d="M1341 77h3v3h-3zM1347 77h3v3h-3zM1344 80h3v3h-3zM1341 83h3v3h-3zM1347 83h3v3h-3z" fill="#f0f0f0"/>
<circle cx="1362" cy="77" r="3" fill="#d88a3c"/><circle cx="1369" cy="85" r="3.500" fill="#d88a3c"/>
<rect x="1376" y="73" width="18" height="18" fill="url(#st)"/><circle cx="1385" cy="81" r="8" fill="url(#sph)"/>
</g>
<!-- OM header icons -->
<use href="#srch" x="1593" y="59"/>
<path d="M1604 60l8-8 8 8M1607 58v9h10v-9" fill="none" stroke="#111" stroke-width="2"/>
<path d="M1625 60q6-5 13 0q-7 5-13 0z" fill="none" stroke="#3a3a3a"/>
<use href="#plus" x="1649" y="59"/>
<path d="M1647 77l3-6 3 6zM1647 508l3 6 3-6z" fill="#999"/>
<!-- AM header icons -->
<path d="M1514 533l15-6-4 6 4 6z" fill="#111"/><path d="M1549 527l-15 10 5-1" fill="none" stroke="#5c5c5c" stroke-width="1.500"/>
<path d="M1565 526l6 14-6-3-6 3z" fill="#111"/>
<use href="#srch" x="1591" y="533"/>
<rect x="1608" y="533" width="10" height="7" fill="none" stroke="#222"/><path d="M1610 533v-3a3 3 0 0 1 6 0" fill="none" stroke="#222"/>
<circle cx="1632" cy="529" r="3" fill="none" stroke="#222"/><circle cx="1632" cy="537" r="3" fill="none" stroke="#222"/>
<use href="#plus" x="1649" y="533"/>
<use href="#bn" x="1124" y="558"/>
<!-- radios -->
<use href="#rad" x="1120" y="623"/><use href="#rad" x="1289" y="622"/><use href="#rad" x="1120" y="642"/><use href="#rad" x="1128" y="681"/><use href="#rad" x="1288" y="681"/><use href="#rad" x="1128" y="744"/><use href="#rad" x="1295" y="744"/>
<use href="#rad2" x="1127" y="701"/><use href="#rad2" x="1127" y="764"/>
<path d="M1125 659h8l-4 5z M1125 722h8l-4 5z" fill="#ddd"/>
</svg>
</body></html>
